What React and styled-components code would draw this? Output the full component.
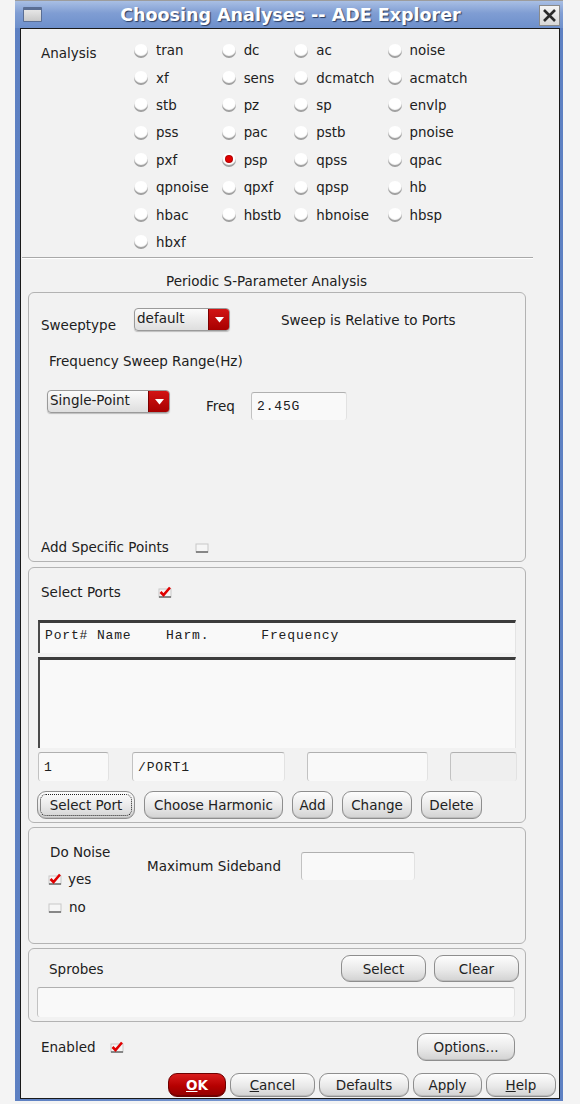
import React from "react";
import styled, { createGlobalStyle } from "styled-components";

const GlobalStyle = createGlobalStyle`
  html, body {
    margin: 0;
    padding: 0;
    background: #f4f4f4;
  }
  body {
    font-family: "DejaVu Sans", "Liberation Sans", sans-serif;
    font-size: 13.5px;
    color: #202020;
  }
  * {
    box-sizing: border-box;
  }
`;

const Page = styled.div`
  width: 580px;
  height: 1104px;
  padding-left: 15px;
`;

const Window = styled.div`
  width: 548px;
  height: 1101px;
  display: flex;
  flex-direction: column;
  background: linear-gradient(90deg, #5d80c2, #7c9bd2 50%, #5d80c2);
  border-top: 1px solid #9c9c9c;
  padding: 0 3px 2px 5px;
`;

const TitleBar = styled.div`
  height: 27px;
  display: flex;
  align-items: center;
  background: linear-gradient(#a9bfe4, #7f9dd3 45%, #6d8fcb);
  margin: 0 -3px 0 -5px;
  padding: 0 3px 0 8px;
`;

const WinIcon = styled.div`
  width: 19px;
  height: 15px;
  border: 1px solid #5a6e94;
  border-top-width: 3px;
  background: linear-gradient(#e6e6e6, #c9c9c9);
  border-radius: 1px;
`;

const Title = styled.div`
  flex: 1;
  text-align: center;
  color: #ffffff;
  font-weight: bold;
  font-size: 17.5px;
  text-shadow: 1px 1px 1px #2a3c60;
`;

const CloseBox = styled.div`
  width: 21px;
  height: 21px;
  display: flex;
  align-items: center;
  justify-content: center;
  background: linear-gradient(#f4f4f4, #d8d8d8);
  border: 1px solid #8a8a8a;
  margin-top: 2px;
`;

const Content = styled.div`
  flex: 1;
  display: flex;
  flex-direction: column;
  background: #f2f2f2;
  border: 1px solid #1a1a1a;
`;

const AnalysisArea = styled.div`
  display: flex;
  padding: 8px 0 0 20px;
`;

const SideLabel = styled.div`
  width: 93px;
  margin-top: 8px;
  flex-shrink: 0;
`;

const RadioGrid = styled.div`
  display: grid;
  grid-template-columns: repeat(4, auto);
  grid-auto-rows: 27.4px;
  column-gap: 13px;
  justify-content: start;
`;

const RadioItem = styled.label`
  display: flex;
  align-items: center;
  gap: 8px;
  font-size: 13.4px;
`;

const RadioDot = styled.span`
  position: relative;
  width: 14px;
  height: 14px;
  border-radius: 50%;
  background: radial-gradient(circle at 50% 40%, #ffffff 0 55%, #ececec 100%);
  box-shadow: inset 0 -2px 1px #9c9c9c;
  flex-shrink: 0;
  &::after {
    content: "";
    display: ${(p) => (p.$on ? "block" : "none")};
    position: absolute;
    left: 4px;
    top: 3px;
    width: 6px;
    height: 6px;
    border-radius: 50%;
    background: #e10000;
    box-shadow: 0 0 0 1px #b40000;
  }
`;

const Separator = styled.div`
  margin: 1px 26px 0 1px;
  border-top: 1px solid #a9a9a9;
  border-bottom: 1px solid #ffffff;
`;

const SectionTitle = styled.div`
  margin: 14px 0 0 145px;
  line-height: 16px;
`;

const Group = styled.div`
  margin: ${(p) => p.$top}px 33px 0 7px;
  height: ${(p) => p.$h}px;
  border: 1px solid #b3b3b3;
  border-radius: 6px;
  display: flex;
  flex-direction: column;
  padding: ${(p) => p.$pad};
`;

const Row = styled.div`
  display: flex;
  align-items: ${(p) => p.$align || "center"};
  margin-top: ${(p) => p.$top || 0}px;
  margin-left: ${(p) => p.$left || 0}px;
`;

const Text = styled.span`
  line-height: 16px;
  width: ${(p) => (p.$w ? `${p.$w}px` : "auto")};
  margin-left: ${(p) => p.$left || 0}px;
  margin-top: ${(p) => p.$mt || 0}px;
  margin-bottom: ${(p) => p.$bottom || 0}px;
  white-space: nowrap;
  flex-shrink: 0;
`;

const Spacer = styled.div`
  flex: 1;
`;

const Dropdown = styled.div`
  width: ${(p) => p.$w}px;
  height: 23px;
  display: flex;
  align-items: center;
  border: 1px solid #9a9a9a;
  border-radius: 4px;
  background: linear-gradient(#fbfbfb, #dedede);
  overflow: hidden;
  padding-left: 2px;
  box-shadow: 0 1px 1px #bdbdbd;
  flex-shrink: 0;
`;

const DropLabel = styled.span`
  flex: 1;
  margin-top: -3px;
`;

const DropArrow = styled.span`
  width: 21px;
  height: 100%;
  display: flex;
  align-items: center;
  justify-content: center;
  background: linear-gradient(#d21414, #a70000);
  border-left: 1px solid #7a0000;
`;

const mono = `
  font-family: "Liberation Mono", "DejaVu Sans Mono", monospace;
  font-size: 13px;
  letter-spacing: 0.85px;
`;

const Field = styled.div`
  width: ${(p) => p.$w}px;
  height: ${(p) => p.$h || 29}px;
  margin-left: ${(p) => p.$left || 0}px;
  margin-top: ${(p) => p.$mt || 0}px;
  display: flex;
  align-items: center;
  padding-left: 5px;
  background: ${(p) => (p.$off ? "#efefef" : "#f9f9f9")};
  border-top: 1px solid #b0b0b0;
  border-left: 1px solid #c2c2c2;
  border-right: 1px solid #e2e2e2;
  border-radius: 3px;
  flex-shrink: 0;
  ${mono}
`;

const ListBox = styled.div`
  margin: ${(p) => p.$top}px 9px 0 9px;
  height: ${(p) => p.$h}px;
  background: #f9f9f9;
  border-top: 3px solid #3c3c3c;
  border-left: 2px solid #4a4a4a;
  border-right: 1px solid #e4e4e4;
  padding: 5px 0 0 5px;
  white-space: pre;
  ${mono}
`;

const Button = styled.button`
  width: ${(p) => p.$w}px;
  height: ${(p) => p.$h || 28}px;
  margin-left: ${(p) => p.$left || 0}px;
  margin-right: ${(p) => p.$right || 0}px;
  padding: 0;
  font-family: "DejaVu Sans", "Liberation Sans", sans-serif;
  font-size: 13.5px;
  color: #222222;
  border: 1px solid #8e8e8e;
  border-radius: 9px;
  background: linear-gradient(#fdfdfd, #e9e9e9 55%, #d2d2d2);
  box-shadow: inset 0 -1px 0 #bdbdbd;
  flex-shrink: 0;
  outline: ${(p) => (p.$focus ? "1px dotted #222" : "none")};
  outline-offset: -4px;
`;

const OkButton = styled(Button)`
  color: #ffffff;
  font-weight: bold;
  border-color: #6e0000;
  background: linear-gradient(#d81c1c, #b50000 55%, #920000);
  box-shadow: inset 0 -1px 0 #700000;
`;

const Mnemonic = styled.span`
  text-decoration: underline;
`;

const CheckWrap = styled.span`
  display: inline-flex;
  width: 14px;
  height: 12px;
  flex-shrink: 0;
`;

const ButtonRow = styled.div`
  display: flex;
  gap: ${(p) => p.$gap}px;
  justify-content: ${(p) => p.$justify || "flex-start"};
  margin: ${(p) => p.$margin};
`;

const NoiseColumn = styled.div`
  width: 99px;
  flex-shrink: 0;
  display: flex;
  flex-direction: column;
`;

function Check({ on }) {
  return (
    <CheckWrap>
      <svg width="14" height="12" viewBox="0 0 14 12">
        <rect x="1" y="3" width="12" height="8" fill="#f6f6f6" stroke="#c8c8c8" />
        <line x1="1" y1="11" x2="13" y2="11" stroke="#6a6a6a" strokeWidth="1.5" />
        {on && (
          <path d="M2.5 6 L5.5 9 L12 1.5" fill="none" stroke="#e00000" strokeWidth="2.6" />
        )}
      </svg>
    </CheckWrap>
  );
}

function Arrow() {
  return (
    <svg width="9" height="6" viewBox="0 0 9 6">
      <path d="M0 0 H9 L4.5 5.5 Z" fill="#ffffff" />
    </svg>
  );
}

const analyses = [
  "tran", "dc", "ac", "noise",
  "xf", "sens", "dcmatch", "acmatch",
  "stb", "pz", "sp", "envlp",
  "pss", "pac", "pstb", "pnoise",
  "pxf", "psp", "qpss", "qpac",
  "qpnoise", "qpxf", "qpsp", "hb",
  "hbac", "hbstb", "hbnoise", "hbsp",
  "hbxf",
];

export default function App() {
  return (
    <Page>
      <GlobalStyle />
      <Window>
        <TitleBar>
          <WinIcon />
          <Title>Choosing Analyses -- ADE Explorer</Title>
          <CloseBox>
            <svg width="15" height="15" viewBox="0 0 15 15">
              <path d="M2 2 L13 13 M13 2 L2 13" stroke="#2a2a2a" strokeWidth="2.6" />
            </svg>
          </CloseBox>
        </TitleBar>
        <Content>
          <AnalysisArea>
            <SideLabel>Analysis</SideLabel>
            <RadioGrid>
              {analyses.map((a) => (
                <RadioItem key={a}>
                  <RadioDot $on={a === "psp"} />
                  {a}
                </RadioItem>
              ))}
            </RadioGrid>
          </AnalysisArea>
          <Separator />
          <SectionTitle>Periodic S-Parameter Analysis</SectionTitle>

          <Group $top={3} $h={270} $pad="15px 0 6px 0">
            <Row $align="flex-end" $left={12}>
              <Text $w={93} $bottom={-2}>Sweeptype</Text>
              <Dropdown $w={96}>
                <DropLabel>default</DropLabel>
                <DropArrow><Arrow /></DropArrow>
              </Dropdown>
              <Text $left={51} $bottom={3}>Sweep is Relative to Ports</Text>
            </Row>
            <Row $top={22} $left={20}>
              <Text>Frequency Sweep Range(Hz)</Text>
            </Row>
            <Row $top={21} $left={18} $align="flex-start">
              <Dropdown $w={123}>
                <DropLabel>Single-Point</DropLabel>
                <DropArrow><Arrow /></DropArrow>
              </Dropdown>
              <Text $w={45} $left={36} $mt={8}>Freq</Text>
              <Field $w={96} $h={28} $mt={2}>2.45G</Field>
            </Row>
            <Spacer />
            <Row $left={12}>
              <Text $w={154}>Add Specific Points</Text>
              <Check />
            </Row>
          </Group>

          <Group $top={5} $h={256} $pad="16px 0 1px 0">
            <Row $left={12}>
              <Text $w={117}>Select Ports</Text>
              <Check on />
            </Row>
            <ListBox $top={20} $h={33}>{"Port# Name    Harm.      Frequency"}</ListBox>
            <ListBox $top={4} $h={91} />
            <Row $top={4} $left={9}>
              <Field $w={71}>1</Field>
              <Field $w={153} $left={23}>/PORT1</Field>
              <Field $w={121} $left={22} />
              <Field $w={67} $left={22} $off />
            </Row>
            <ButtonRow $gap={9} $margin="10px 0 0 8px">
              <Button $w={98} $focus>Select Port</Button>
              <Button $w={139}>Choose Harmonic</Button>
              <Button $w={41}>Add</Button>
              <Button $w={70}>Change</Button>
              <Button $w={61}>Delete</Button>
            </ButtonRow>
          </Group>

          <Group $top={4} $h={117} $pad="16px 0 0 19px">
            <Row $align="flex-start">
              <NoiseColumn>
                <Text $left={2}>Do Noise</Text>
                <Row $top={11}>
                  <Check on />
                  <Text $left={6}>yes</Text>
                </Row>
                <Row $top={12}>
                  <Check />
                  <Text $left={7}>no</Text>
                </Row>
              </NoiseColumn>
              <Row $top={8}>
                <Text $w={154}>Maximum Sideband</Text>
                <Field $w={114} $h={28} />
              </Row>
            </Row>
          </Group>

          <Group $top={4} $h={74} $pad="6px 6px 3px 8px">
            <Row>
              <Text $left={12}>Sprobes</Text>
              <Spacer />
              <Button $w={85} $h={27}>Select</Button>
              <Button $w={85} $h={27} $left={8}>Clear</Button>
            </Row>
            <Field $w={478} $h={30} $mt={5} />
          </Group>

          <Row $top={11} $left={20}>
            <Text $w={69}>Enabled</Text>
            <Check on />
            <Spacer />
            <Button $w={98} $right={44}>Options...</Button>
          </Row>

          <ButtonRow $gap={4} $justify="flex-end" $margin="12px 3px 0 0">
            <OkButton $w={58} $h={24}><Mnemonic>O</Mnemonic>K</OkButton>
            <Button $w={85} $h={24}><Mnemonic>C</Mnemonic>ancel</Button>
            <Button $w={90} $h={24}>Defaults</Button>
            <Button $w={69} $h={24}>Apply</Button>
            <Button $w={70} $h={24}><Mnemonic>H</Mnemonic>elp</Button>
          </ButtonRow>
        </Content>
      </Window>
    </Page>
  );
}
